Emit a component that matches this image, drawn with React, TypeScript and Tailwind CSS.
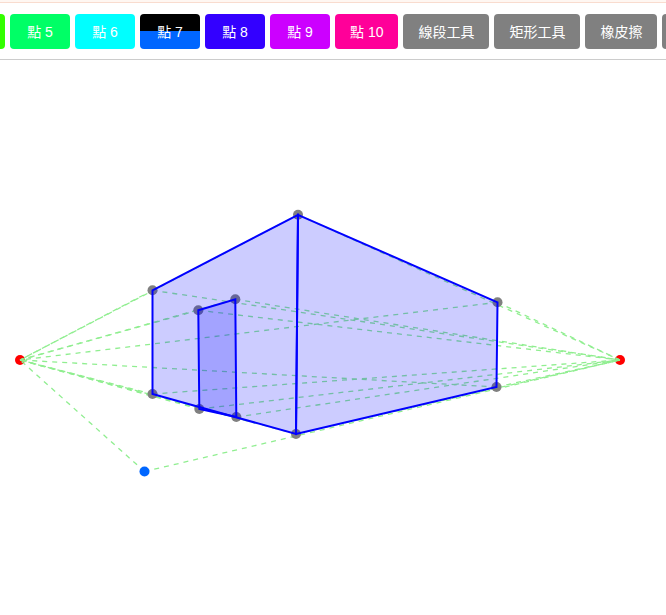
import { useState } from "react";

type Point = { x: number; y: number };

const pointButtons = [
  { id: 5, color: "bg-[#00ff66]" },
  { id: 6, color: "bg-[#00ffff]" },
  { id: 7, color: "bg-linear-to-b from-black from-50% to-[#0066ff] to-50%" },
  { id: 8, color: "bg-[#3300ff]" },
  { id: 9, color: "bg-[#cc00ff]" },
  { id: 10, color: "bg-[#ff0099]" },
];

const tools = ["線段工具", "矩形工具", "橡皮擦"];

const vanishing: Point[] = [
  { x: 20, y: 300 },
  { x: 620, y: 300 },
];

const a = { x: 152.5, y: 230.3 };
const b = { x: 298, y: 154.8 };
const c = { x: 497.5, y: 242.3 };
const d = { x: 496.5, y: 327 };
const e = { x: 296, y: 374 };
const f = { x: 152.5, y: 334 };
const g = { x: 198.3, y: 250.3 };
const h = { x: 235.3, y: 239.3 };
const i = { x: 236.3, y: 357 };
const j = { x: 199.3, y: 349 };

const corners: Point[] = [a, b, c, d, e, f, g, h, i, j];
const cursor: Point = { x: 144.5, y: 411.5 };
const faces: Point[][] = [
  [a, b, e, f],
  [b, c, d, e],
  [g, h, i, j],
];

const toPath = (points: Point[]) => points.map((p) => `${p.x},${p.y}`).join(" ");

function Drawing() {
  return (
    <svg className="block h-[555px] w-full" role="img" aria-label="兩點透視">
      {vanishing.map((v) => (
        <circle key={v.x} cx={v.x} cy={v.y} r={5} fill="#ff0000" />
      ))}
      {[...corners, cursor].map((p, n) => (
        <g key={n}>
          {vanishing.map((v) => (
            <line
              key={v.x}
              x1={p.x}
              y1={p.y}
              x2={v.x}
              y2={v.y}
              stroke="#90ee90"
              strokeWidth={1.3}
              strokeDasharray="5 5"
            />
          ))}
        </g>
      ))}
      {corners.map((p, n) => (
        <circle key={n} cx={p.x} cy={p.y} r={5} fill="#808080" />
      ))}
      <circle cx={cursor.x} cy={cursor.y} r={5} fill="#0066ff" />
      {faces.map((face, n) => (
        <polygon
          key={n}
          points={toPath(face)}
          fill="#0000ff"
          fillOpacity={0.2}
          stroke="#0000ff"
          strokeWidth={2}
        />
      ))}
    </svg>
  );
}

export default function App() {
  const [selected, setSelected] = useState(7);
  const base =
    "h-[35px] min-w-[60px] shrink-0 rounded-sm px-[15px] text-sm whitespace-nowrap text-white";

  return (
    <div className="overflow-hidden bg-white font-['Liberation_Sans','Noto_Sans_CJK_TC',sans-serif]">
      <div className="h-[3px] border-b border-[#f9dccf] bg-[#fff7f2]" />
      <nav className="overflow-hidden border-b border-[#cccccc] pt-[11px] pb-2.5">
        <div className="-ml-[55px] flex gap-[5px]">
          <button
            type="button"
            aria-label="點 4"
            aria-pressed={selected === 4}
            onClick={() => setSelected(4)}
            className={`${base} bg-[#33ff00]`}
          />
          {pointButtons.map((p) => (
            <button
              key={p.id}
              type="button"
              aria-pressed={selected === p.id}
              onClick={() => setSelected(p.id)}
              className={`${base} ${p.color}`}
            >
              點 {p.id}
            </button>
          ))}
          {tools.map((t) => (
            <button key={t} type="button" className={`${base} bg-[#808080]`}>
              {t}
            </button>
          ))}
          <button type="button" aria-label="清除" className={`${base} bg-[#808080]`} />
        </div>
      </nav>
      <main>
        <Drawing />
      </main>
    </div>
  );
}
